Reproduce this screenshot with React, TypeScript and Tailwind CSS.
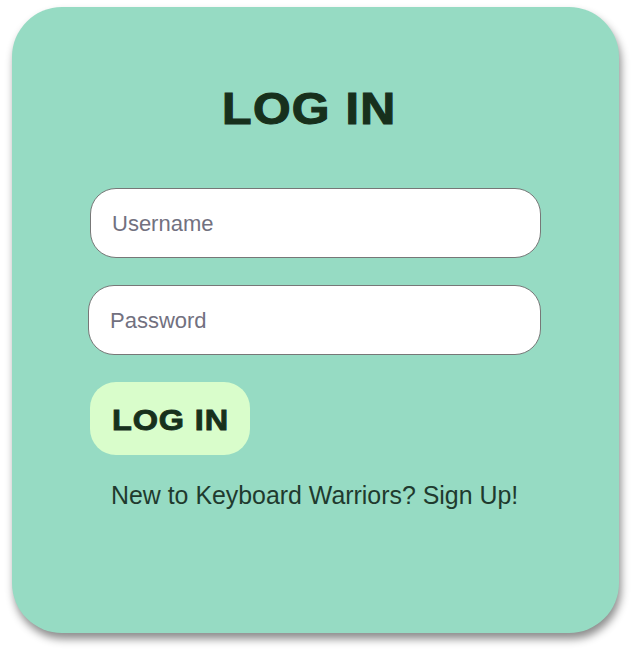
import React from "react";

export default function App() {
  return (
    <div className="min-h-[651px] w-[631px] bg-white pt-[7px] pl-[12px] font-['Liberation_Sans',Arial,sans-serif]">
      <div className="flex h-[626px] w-[607px] flex-col items-start rounded-[50px] bg-[#96dbc3] pl-[78px] pt-[80px] shadow-[2px_6px_8px_rgba(0,0,0,0.45)]">
        {/* heavy heading, widened to stand in for Arial Black */}
        <h1 className="ml-[132px] origin-left scale-x-110 text-[44px] font-bold leading-none tracking-[1.2px] text-[#17301c] [-webkit-text-stroke:1.1px_#17301c]">
          LOG IN
        </h1>
        <input
          type="text"
          placeholder="Username"
          className="mt-[57px] h-[70px] w-[451px] rounded-[26px] border border-[#777777] bg-white pl-[21px] pt-[1px] text-[22px] text-[#222] outline-none placeholder:text-[#72717f]"
        />
        <input
          type="password"
          placeholder="Password"
          className="-ml-[2px] mt-[27px] h-[70px] w-[453px] rounded-[26px] border border-[#777777] bg-white pl-[21px] pt-[1px] text-[22px] text-[#222] outline-none placeholder:text-[#72717f]"
        />
        <button className="mt-[27px] flex h-[73px] w-[160px] items-center justify-start rounded-[26px] bg-[#d9fdcb] pl-[22px] pt-[2px] text-[29.5px] font-bold leading-none text-[#17301c]">
          <span className="inline-block origin-left scale-x-110 tracking-[0.8px] [-webkit-text-stroke:0.9px_#17301c]">
            LOG IN
          </span>
        </button>
        <p className="ml-[21px] mt-[28px] text-[24.9px] leading-none text-[#1f3a2e]">
          New to Keyboard Warriors? Sign Up!
        </p>
      </div>
    </div>
  );
}
